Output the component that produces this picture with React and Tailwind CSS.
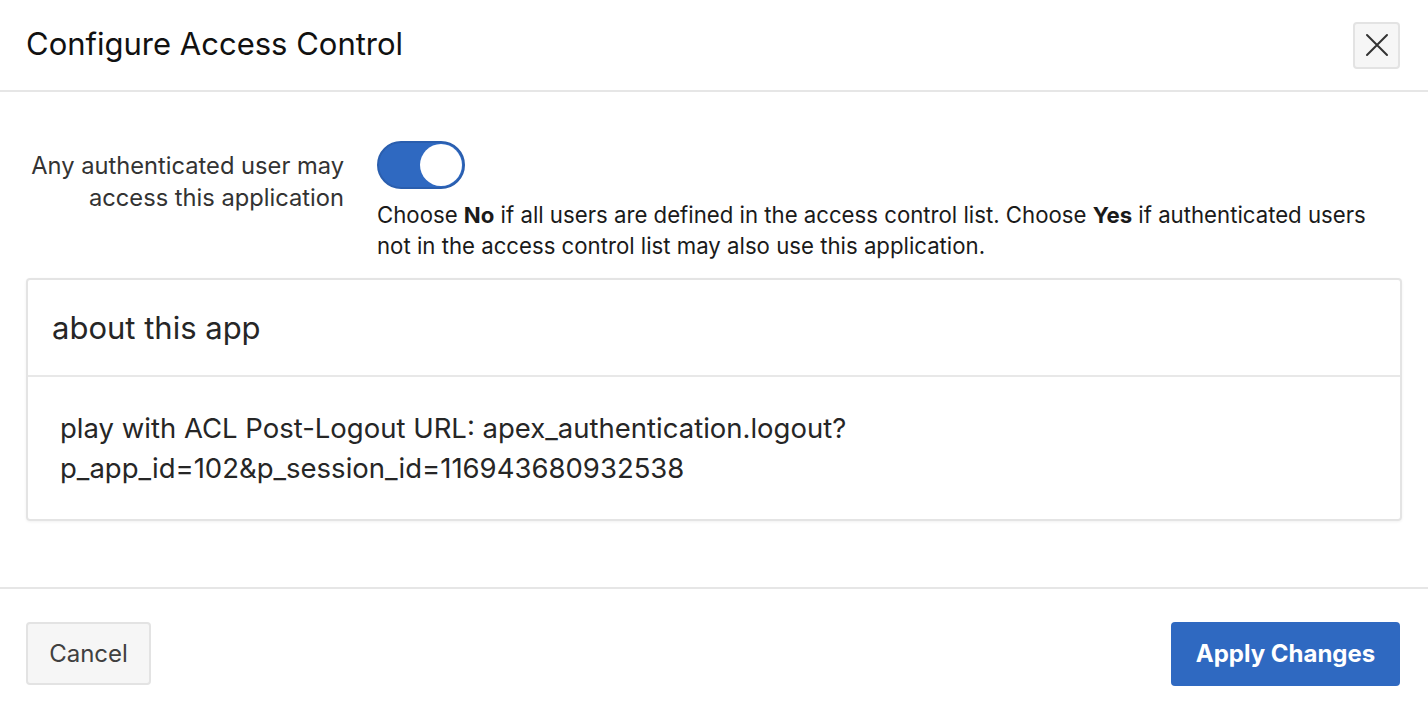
import React from "react";

export default function App() {
  return (
    <div className="w-[1428px] h-[714px] bg-white flex flex-col overflow-hidden" style={{ fontFamily: 'Inter, "Liberation Sans", Arial, sans-serif' }}>
      {/* Header */}
      <div className="h-[92px] flex items-center justify-between pl-[26px] pr-[28px] border-b-2 border-[#e6e6e6]">
        <h1 className="text-[31px] text-[#111] leading-none -mt-[3px]">Configure Access Control</h1>
        <button className="w-[47px] h-[47px] flex items-center justify-center bg-[#f6f6f6] border-2 border-[#e3e3e3] rounded-[4px]">
          <svg width="24" height="24" viewBox="0 0 24 24" fill="none" stroke="#333" strokeWidth="2" strokeLinecap="round">
            <path d="M2 2L22 22M22 2L2 22" />
          </svg>
        </button>
      </div>

      {/* Body */}
      <div className="flex-1 px-[26px] pt-[49px]">
        <div className="flex">
          <div className="w-[318px] text-right text-[23.7px] leading-[32px] text-[#333] pt-[9px]">
            Any authenticated user may access this application
          </div>
          <div className="ml-[33px] flex flex-col">
            <div className="w-[88px] h-[48px] rounded-full bg-[#2f69c1] border-2 border-[#2a5eae] flex items-center justify-end pr-[1px]">
              <div className="w-[42px] h-[42px] rounded-full bg-white"></div>
            </div>
            <p className="mt-[10px] text-[22.2px] leading-[31px] text-[#1a1a1a] w-[1005px]">
              Choose <b>No</b> if all users are defined in the access control list. Choose <b>Yes</b> if authenticated users not in the access control list may also use this application.
            </p>
          </div>
        </div>

        {/* Card */}
        <div className="mt-[17px] border-2 border-[#e4e4e4] rounded-[4px] shadow-[0_1px_3px_rgba(0,0,0,0.06)]">
          <div className="h-[97px] flex items-center px-[24px] border-b-2 border-[#e8e8e8]">
            <h2 className="text-[31px] text-[#262626] leading-none">about this app</h2>
          </div>
          <div className="px-[32px] pt-[31px] pb-[31px] text-[27.5px] leading-[40px] text-[#262626]">
            play with ACL Post-Logout URL: apex_authentication.logout?
            <br />
            p_app_id=102&amp;p_session_id=116943680932538
          </div>
        </div>
      </div>

      {/* Footer */}
      <div className="h-[127px] border-t-2 border-[#e6e6e6] flex items-start justify-between px-[26px] pt-[33px]">
        <button className="w-[125px] h-[63px] bg-[#f6f6f6] border-2 border-[#e3e3e3] rounded-[4px] text-[24px] text-[#404040]">
          Cancel
        </button>
        <button className="mr-[2px] w-[229px] h-[64px] bg-[#2f69c1] rounded-[4px] text-[24px] font-bold text-white">
          Apply Changes
        </button>
      </div>
    </div>
  );
}
